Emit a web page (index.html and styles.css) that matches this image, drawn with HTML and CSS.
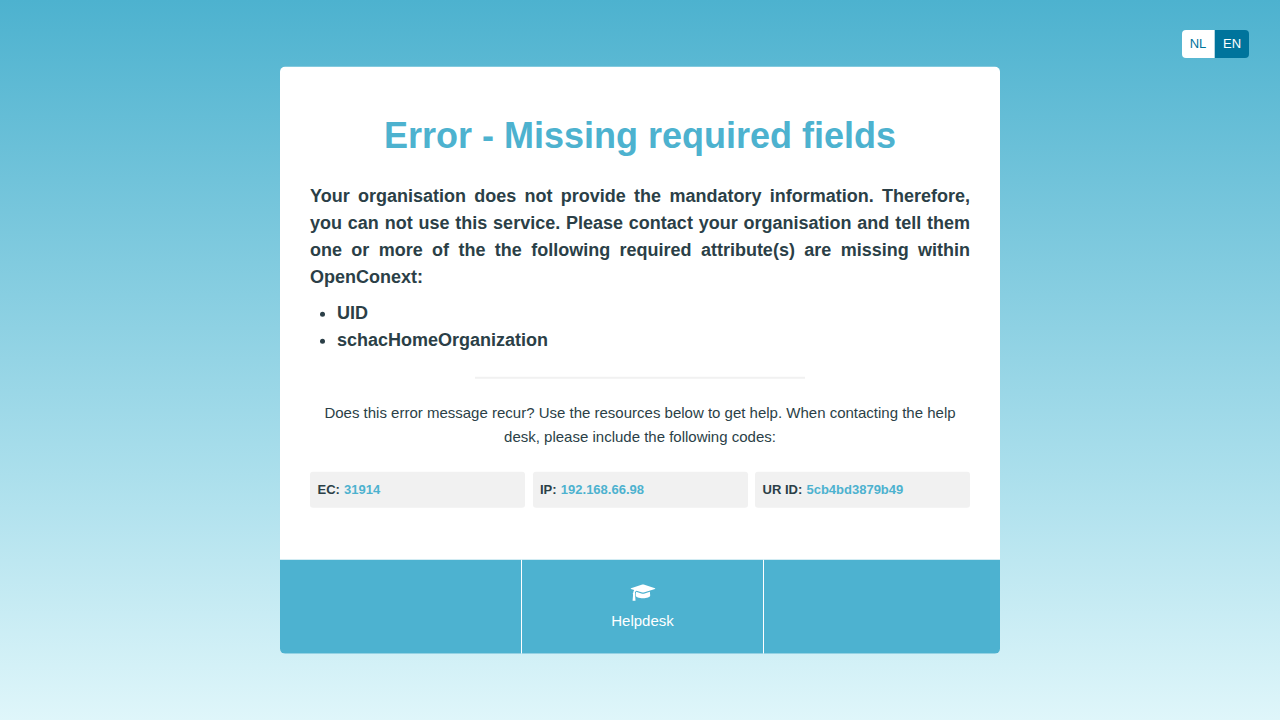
FILE: index.html
```html
<!DOCTYPE html>
<html lang="en">
<head>
<meta charset="utf-8">
<title>Error - Missing required fields</title>
<link rel="stylesheet" href="styles.css">
</head>
<body>
<nav class="languages"><a class="language">NL</a><a class="language active">EN</a></nav>
<main class="card">
  <section class="content">
    <h1 class="title">Error - Missing required fields</h1>
    <div class="message">
      <p class="lead">Your organisation does not provide the mandatory information. Therefore, you can not use this service. Please contact your organisation and tell them one or more of the the following required attribute(s) are missing within OpenConext:</p>
      <ul class="attributes"><li>UID</li><li>schacHomeOrganization</li></ul>
    </div>
    <hr class="divider">
    <p class="help">Does this error message recur? Use the resources below to get help. When contacting the help desk, please include the following codes:</p>
    <div class="codes">
      <div class="code">EC: <span class="value">31914</span></div>
      <div class="code">IP: <span class="value">192.168.66.98</span></div>
      <div class="code">UR ID: <span class="value">5cb4bd3879b49</span></div>
    </div>
  </section>
  <footer class="footer">
    <div class="cell"></div>
    <a class="cell helpdesk">
      <svg class="icon" width="26" height="18" viewBox="0 0 26 18"><path fill="#fff" d="M1 4.500 12.300.8q.7-.2 1.400 0L25 4.500q.6.3 0 .7L13.700 8.700q-.7.2-1.400 0L6.500 6.900q-1.400.5-1.600 2 .9 1.100.2 2.100l.4 5.500q0 .6-.5.6H3q-.5 0-.4-.6L3.100 11q-.8-1.200.2-2.200 0-1.500.9-2.500L1 5.200q-.6-.4 0-.7zM6.100 8l6 1.900q.9.300 1.800 0l6-1.900.3 3.800c0 1.700-3.200 2.700-7.200 2.700s-7.200-1-7.200-2.700z"/></svg>
      <span>Helpdesk</span>
    </a>
    <div class="cell"></div>
  </footer>
</main>
</body>
</html>
```
FILE: styles.css
```css
* { box-sizing: border-box; }
body { margin: 0; height: 720px; padding-top: 67px; position: relative; font-family: "Liberation Sans", Arial, sans-serif; color: #2b3f47; background: linear-gradient(#4db2cf 0%, #abdfec 66%, #dff6fa 100%); overflow: hidden; }
.languages { position: absolute; top: 30px; right: 31px; display: flex; height: 28px; border-radius: 4px; overflow: hidden; font-size: 13px; line-height: 28px; }
.language { width: 32px; text-align: center; color: #00749c; background: #fff; }
.language.active { width: 35px; color: #fff; background: #00749c; border-left: 1px solid #b3d5e1; }
.card { width: 720px; height: 587px; margin: 0 auto; border-radius: 5px; overflow: hidden; background: #fff; display: flex; flex-direction: column; transform: translateY(-0.25px); }
.content { height: 493px; padding: 42px 30px 0; }
.title { margin: 0; color: #4db2cf; font-size: 36px; line-height: 54px; text-align: center; }
.message { margin-top: 20px; font-size: 18px; line-height: 27px; font-weight: bold; }
.lead { margin: 0; text-align: justify; }
.attributes { margin: 9px 0 0; padding-left: 27px; }
.divider { width: 330px; height: 2px; margin: 23px auto 22px; border: 0; background: #f1f1f1; }
.help { margin: 0; font-size: 15px; line-height: 24px; text-align: center; }
.codes { display: grid; grid-template-columns: repeat(3, 1fr); gap: 7.5px; margin-top: 23px; }
.code { height: 36px; padding-left: 7.5px; border-radius: 3px; background: #f1f1f1; font-size: 13px; line-height: 36px; font-weight: bold; }
.value { margin-left: .6px; color: #4db2cf; }
.footer { display: grid; grid-template-columns: 242px 242px 236px; height: 94px; background: #4db2d0; color: #fff; }
.cell:not(:last-child) { border-right: 1px solid #fff; }
.helpdesk { display: flex; flex-direction: column; align-items: center; padding-top: 24px; font-size: 15px; line-height: 24px; }
.icon { margin-bottom: 7px; }
```
